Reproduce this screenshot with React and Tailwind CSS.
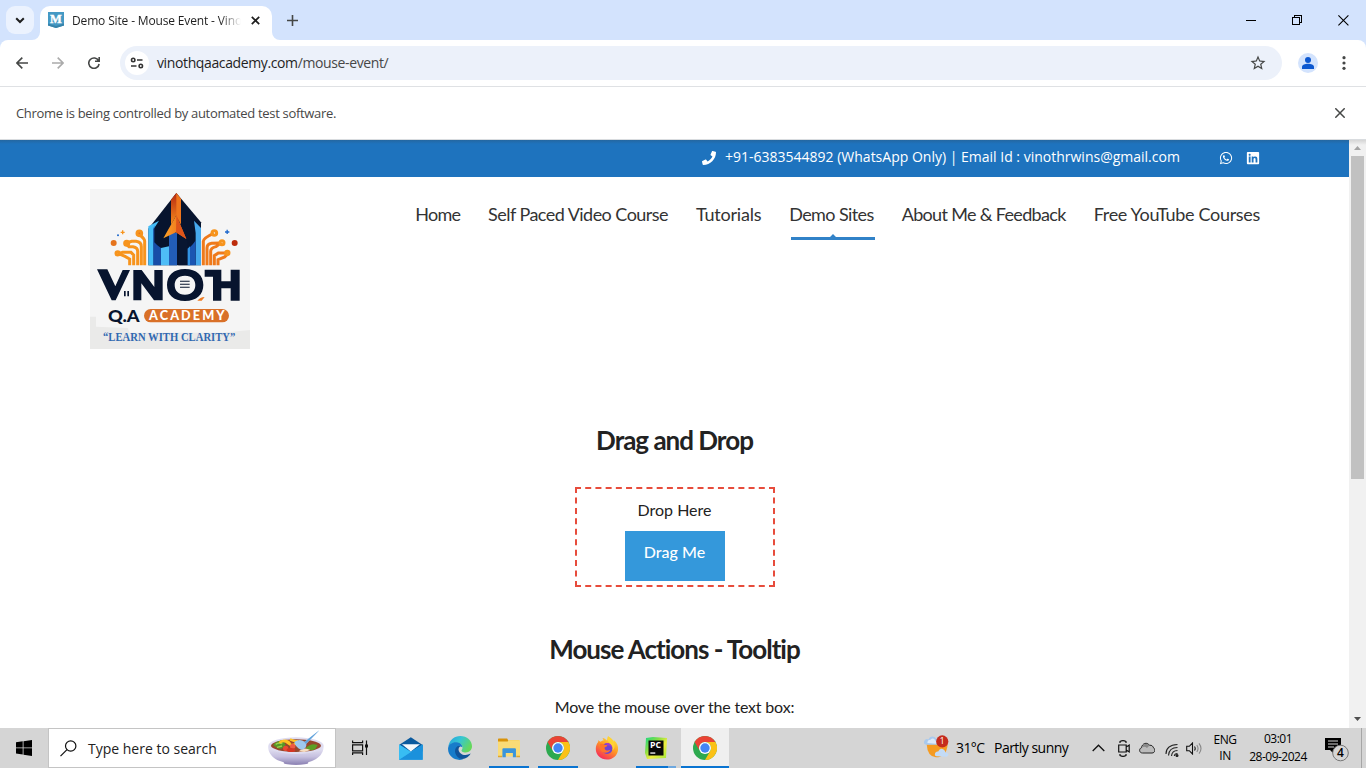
import React from "react";
import { FaPhone, FaWhatsapp, FaLinkedin } from "react-icons/fa";
import { MdStarOutline } from "react-icons/md";

const ui = "font-['Open_Sans','Noto_Sans',sans-serif]";

function TabStrip() {
  return (
    <div className="flex h-10 shrink-0 items-end bg-[#d3e3fd]">
      <div className="flex h-10 w-10 items-start pl-1.5 pt-1.5">
        <div className="flex h-7 w-7 items-center justify-center rounded-[9px] bg-[#ebf2fe]">
          <svg width="10" height="7" viewBox="0 0 10 7" fill="none" stroke="#1f1f1f" strokeWidth="2">
            <path d="M1.2 1.2 5 5l3.8-3.8" />
          </svg>
        </div>
      </div>
      <div className="relative flex h-[34px] w-[232px] items-start rounded-t-[10px] bg-white pl-2">
        <svg className="absolute -left-2 bottom-0" width="8" height="8"><path d="M8 0v8H0a8 8 0 0 0 8-8z" fill="#fff" /></svg>
        <svg className="absolute -right-2 bottom-0" width="8" height="8"><path d="M0 0v8h8a8 8 0 0 1-8-8z" fill="#fff" /></svg>
        <svg className="mt-1.5" width="16" height="16" viewBox="0 0 16 16">
          <path d="M0 0h16v13.5L8 16 0 13.5z" fill="#4499c4" />
          <path d="M0 11.5 8 14l8-2.5v2L8 16l-8-2.5z" fill="#3783aa" />
          <text x="8" y="11.3" textAnchor="middle" fontFamily="Liberation Serif" fontWeight="700" fontSize="12.5" fill="#fff" stroke="#fff" strokeWidth=".4">M</text>
        </svg>
        <div className={`ml-2 mt-[5px] h-5 w-[172px] whitespace-nowrap text-[12px] leading-5 tracking-[-0.15px] text-[#1f1f1f] [mask-image:linear-gradient(to_right,black_148px,transparent_169px)] ${ui}`}>
          Demo Site - Mouse Event - Vino
        </div>
        <svg className="ml-[7px] mt-[10px]" width="9" height="9" viewBox="0 0 9 9" stroke="#1f1f1f" strokeWidth="1.7">
          <path d="m.8.8 7.4 7.4M8.2.8.8 8.2" />
        </svg>
      </div>
      <svg className="mb-[14px] ml-[15px]" width="11" height="11" viewBox="0 0 11 11" stroke="#454746" strokeWidth="1.6">
        <path d="M5.5 0v11M0 5.5h11" />
      </svg>
      <div className="mb-[14px] ml-auto flex items-center">
        <svg width="10" height="12" viewBox="0 0 10 12" stroke="#000" shapeRendering="crispEdges"><path d="M0 6.5h10" /></svg>
        <svg className="ml-9" width="11" height="12" viewBox="0 0 11 12" fill="none" stroke="#000" shapeRendering="crispEdges">
          <path d="M.5 3.5h7v7h-7zM2.5 3V1.500h7v7H8" />
        </svg>
        <svg className="ml-[35px] mr-[17px]" width="11" height="11" viewBox="0 0 11 11" stroke="#000" strokeWidth="1.1"><path d="m.4.4 10 10M10.400.4l-10 10" /></svg>
      </div>
    </div>
  );
}

function Toolbar() {
  return (
    <div className="shrink-0 bg-[#d3e3fd]">
      <div className="flex h-[47px] items-start rounded-t-[8px] border-b border-[#dfe1e4] bg-white pt-1.5">
        <svg className="ml-4 mt-[11px]" width="12" height="12" viewBox="0 0 12 12" fill="none" stroke="#454746" strokeWidth="1.6"><path d="M12 6H1M6.300.6.9 6l5.400 5.400" /></svg>
        <svg className="ml-6 mt-[11px]" width="12" height="12" viewBox="0 0 12 12" fill="none" stroke="#ababab" strokeWidth="1.6"><path d="M0 6h11M5.700.6 11.100 6l-5.400 5.400" /></svg>
        <svg className="ml-6 mt-[11px]" width="12" height="12" viewBox="0 0 12 12" fill="none" stroke="#454746" strokeWidth="1.6"><path d="M10.600 3.800A5.200 5.200 0 1 0 11.100 7M11.200 0v4.200H7" /></svg>
        <div className="ml-5 flex h-[34px] w-[1162px] items-center rounded-full bg-[#ecf1fa] pl-[5px]">
          <div className="flex h-6 w-6 items-center justify-center rounded-full bg-white">
            <svg width="14" height="12" viewBox="0 0 14 12" fill="none" stroke="#333" strokeWidth="1.6">
              <circle cx="3.200" cy="3" r="1.700" /><path d="M7 3h5.500M1 9h5.500" /><circle cx="10.800" cy="9" r="1.700" />
            </svg>
          </div>
          <span className={`ml-2 whitespace-nowrap text-[14px] leading-5 tracking-[-0.38px] text-[#1f1f1f] ${ui}`}>vinothqaacademy.com<span className="text-[#474747]">/mouse-event/</span></span>
          <MdStarOutline className="ml-auto mr-[15px] h-[18px] w-[18px] text-[#454746]" />
        </div>
        <div className="ml-4 mt-[7px] flex h-5 w-5 items-center justify-center rounded-full bg-[#d3e3fd]">
          <svg width="12" height="12" viewBox="0 0 12 12" fill="#0b57d0"><circle cx="6" cy="3" r="3" /><path d="M0 12v-2c0-2 3-3.200 6-3.200S12 8 12 10v2z" /></svg>
        </div>
        <svg className="ml-[24px] mt-[10px]" width="4" height="14" viewBox="0 0 4 14" fill="#454746"><circle cx="2" cy="1.700" r="1.600" /><circle cx="2" cy="7" r="1.600" /><circle cx="2" cy="12.300" r="1.600" /></svg>
      </div>
    </div>
  );
}

function InfoBar() {
  return (
    <div className={`flex h-[53px] shrink-0 items-center border-b border-[#d9dcdf] bg-white pl-4 pr-[21px] ${ui}`}>
      <span className="whitespace-nowrap text-[13px] leading-5 tracking-[-0.32px] text-[#474747]">Chrome is being controlled by automated test software.</span>
      <svg className="ml-auto" width="10" height="10" viewBox="0 0 10 10" stroke="#454746" strokeWidth="1.5"><path d="m.3.3 9.400 9.400M9.700.3.3 9.700" /></svg>
    </div>
  );
}

function Logo() {
  return (
    <svg width="160" height="160" viewBox="30 27 480 480" className="mt-3 shrink-0">
      <defs>
        <linearGradient id="fire" x1="0" y1="0" x2="0" y2="1"><stop offset="0" stopColor="#b62a12" /><stop offset="1" stopColor="#f58a1c" /></linearGradient>
        <linearGradient id="gold" x1="0" y1="0" x2="1" y2="0"><stop offset="0" stopColor="#fca326" /><stop offset="1" stopColor="#e9651b" /></linearGradient>
      </defs>
      <path d="M30 27h480v480H30z" fill="#f5f5f5" />
      <path d="M30 410l18 0v30l95 4 6 14 277 0 84-8v57H30z" fill="#eaeae9" />
      <g fill="none" stroke="#f7941d" strokeWidth="9">
        <path d="M194 256v-73q0-6-14-18M184 256v-56q0-14-16-16h-13l-16 5M173 256v-42q0-12-14-14h-12l-10-10M161 256v-31l-8-8h-25l-12 4M149 256v-19l-14-8-19-8" />
        <path d="M370 256v-72q0-10 31-24M381 256v-52q0-12 14-14l26-1M392 256v-42q0-10 16-14l16-12M403 256v-29l12-8h26M414 256v-17l20-8 9-10" stroke="#ef7a1b" />
        <circle cx="178" cy="160" r="7" fill="#e8741c" /><circle cx="140" cy="190" r="6" /><circle cx="113" cy="220" r="5" /><circle cx="403" cy="159" r="7" /><circle cx="426" cy="188" r="6" /><circle cx="442" cy="219" r="5" />
      </g>
      <circle cx="101" cy="189" r="9" fill="#e5741d" /><circle cx="464" cy="189" r="9" fill="#bd2c0b" />
      <path d="M122 157h12M128 151v12" stroke="#f7941d" strokeWidth="4" />
      <path d="M435 156h13M441.500 149v13" stroke="#1d68cd" strokeWidth="4" /><circle cx="114" cy="166" r="3" fill="#1d68cd" />
      <path d="M289 39 363 127v129H205V146z" fill="#07142e" />
      <path d="M205 139l32-17-16 25v109h-16z" fill="#46bdf7" />
      <path d="M220 148l3-12v51q8 10 20 17v52h-23z" fill="#174da7" />
      <path d="M342 122l21 22v112h-16v-97z" fill="#46a9ed" />
      <path d="M347 150v106h-24v-50q13-7 24-25z" fill="#1b55b2" />
      <path d="M243 204l24-5v57h-24z" fill="#4ebdf7" />
      <path d="M267 158h24v98h-24z" fill="#225db8" /><path d="M301 166l22 17v73h-28v-90z" fill="#081631" />
      <path d="M323 206l7-7v57h-7z" fill="#3193e4" />
      <path d="M289 39l-16 20v75l16-28 14 27V57z" fill="url(#fire)" />
      <path d="M289 39v70l14 24V57z" fill="#ee751d" />
      <path d="M289 106 319 177l-31-20-38 18z" fill="url(#gold)" />
      <path d="M289 106 319 177l-31-20z" fill="#df551a" />
      <g fill="#07142e">
        <path d="M51 268h31l24 51 22-49h22l-43 91H95z" />
        <path d="M160 361v-91h25l38 51v-51h25v91h-26l-38-51v51z" />
        <path fillRule="evenodd" d="M315 267c35 0 55 20 55 48s-20 48-55 48-54-20-54-48 19-48 54-48zm0 20c-21 0-31 12-31 28s10 29 31 29 31-13 31-29-10-28-31-28z" />
        <path d="M374 269h50v35h28v-35h27v93h-27v-37h-28v37h-25v-72h-25z" />
        <path d="M132 333h5v16h-5zM142 333h5v16h-5z" /><path d="M300 302h29v3h-29zM300 311h29v3h-29zM300 320h29v3h-29z" />
      </g>
      <path d="M352 362q8-10 22-11l-9 11z" fill="#ed7b23" />
      <text x="84" y="427" textLength="95" lengthAdjust="spacingAndGlyphs" fontFamily="Lato" fontWeight="900" fontSize="53" fill="#07142e">Q.A</text>
      <rect x="192" y="387" width="255" height="40" rx="20" fill="#d97028" />
      <text x="207" y="420" textLength="227" fontFamily="Lato" fontWeight="900" fontSize="38" fill="#fff">ACADEMY</text>
      <text x="69" y="482" textLength="397" lengthAdjust="spacingAndGlyphs" fontFamily="Liberation Serif" fontWeight="700" fontSize="35" fill="#3168b1">“LEARN WITH CLARITY”</text>
    </svg>
  );
}

const menu = [
  { label: "Home", cls: "h-10 tracking-[-0.8px]" },
  { label: "Self Paced Video Course", cls: "h-10 tracking-[-0.54px]" },
  { label: "Tutorials", cls: "h-10 tracking-[-0.22px]" },
  { label: "Demo Sites", cls: "relative h-10 tracking-[-0.6px]", active: true },
  { label: "About Me & Feedback", cls: "h-10 tracking-[-0.67px]" },
  { label: "Free YouTube Courses", cls: "h-10 tracking-[-0.32px]" },
];

function Page() {
  return (
    <div className="flex h-[588px] shrink-0 overflow-hidden bg-white">
      <div className="flex w-[1349px] flex-col font-['Lato',sans-serif] text-[#222]">
        <div className="flex h-[37px] shrink-0 justify-end bg-[#1e73be] bg-[linear-gradient(to_bottom,#2467a1,#1e73be_4px)] pr-[89px] text-white">
          <FaPhone className="mt-[11px] h-[14px] w-[14px]" />
          <span className={`ml-[9px] mt-[7px] w-[456px] whitespace-nowrap text-[14px] font-medium leading-5 ${ui}`}>+91-6383544892 (WhatsApp Only) | Email Id : vinothrwins@gmail.com</span>
          <FaWhatsapp className="ml-[38px] mt-[11px] h-[14px] w-[14px]" />
          <FaLinkedin className="ml-[13px] mt-[11px] h-[14px] w-[14px]" />
        </div>
        <div className="flex shrink-0 justify-between pl-[90px] pr-[89px]">
          <Logo />
          <nav className="mt-[23px] flex h-10 gap-7 whitespace-nowrap text-[18px] leading-[28px] text-[#333]">
            {menu.map(({ label, cls, active }) => (
              <div key={label} className={cls}>
                {label}
                {active && <svg className="absolute -right-px bottom-0" width="84" height="6" viewBox="0 0 84 6" fill="#3182c8"><path d="M0 3h39l3-3 3 3h39v3H0z" /></svg>}
              </div>
            ))}
          </nav>
        </div>
        <div className="flex flex-col items-center pt-[71px]">
          <h2 className="text-[26px] font-bold leading-10 tracking-[-1px]">Drag and Drop</h2>
          <div className="mt-[27px] flex h-[100px] w-[200px] flex-col items-center border-2 border-dashed border-[#e74c3c] pt-[7px]">
            <div className="text-[16px] leading-[27px]">Drop Here</div>
            <div className="mt-2 h-[50px] w-[100px] bg-[#3498db] pt-[7px] text-center text-[16px] font-medium leading-[27px] text-white">Drag Me</div>
          </div>
          <h2 className="mt-[42px] text-[26px] font-bold leading-10 tracking-[-1px]">Mouse Actions - Tooltip</h2>
          <p className="mt-6 text-[16px] leading-[27px] tracking-[-0.18px]">Move the mouse over the text box:</p>
        </div>
      </div>
      <div className="flex w-[17px] flex-col items-center bg-[#f1f1f1] bg-[linear-gradient(to_bottom,#d5d5d5,#f1f1f1_5px)]">
        <svg className="mt-1.5" width="7" height="4"><path d="M0 4 3.500 0 7 4z" fill="#a3a3a3" /></svg>
        <div className="mt-1.5 h-[323px] w-[13px] bg-[#c1c1c1]" />
        <svg className="mb-[7px] mt-auto" width="7" height="4"><path d="M0 0h7L3.500 4z" fill="#505050" /></svg>
      </div>
    </div>
  );
}

function Chrome() {
  return (
    <svg width="24" height="24" viewBox="0 0 24 24">
      <circle cx="12" cy="12" r="12" fill="#2da94f" />
      <path d="M12 0a12 12 0 0 1 10.400 6H12a6 6 0 0 0-5.200 9L1.600 6A12 12 0 0 1 12 0z" fill="#ea4335" />
      <path d="M22.400 6A12 12 0 0 1 12 24l5.200-9A6 6 0 0 0 12 6z" fill="#fbc116" />
      <circle cx="12" cy="12" r="6" fill="#fff" /><circle cx="12" cy="12" r="4.700" fill="#4285f4" />
    </svg>
  );
}

const Mail = () => (
  <svg width="24" height="23" viewBox="57 35 73 68">
    <path d="M57 58 93 35l36 23v20H57z" fill="#0b5a9e" /><path d="M66 56h55L93 78z" fill="#f5f9fc" />
    <path d="M57 57l36 22 36-22v46H57z" fill="#28a8ea" /><path d="M129 57 57 103h72z" fill="#1b91dc" /><path d="M57 57l36 23-36 23z" fill="#38bdf3" />
  </svg>
);

const Edge = () => (
  <svg width="24" height="24" viewBox="0 0 24 24">
    <defs>
      <linearGradient id="edgeTop" x1="0" y1="0" x2="1" y2=".5"><stop offset="0" stopColor="#239fdf" /><stop offset=".5" stopColor="#36c6d2" /><stop offset="1" stopColor="#65d85b" /></linearGradient>
    </defs>
    <path d="M.3 10.500C1.500 4 6.500 0 12.300 0 19 0 24 4.800 24 10.300c0 3.900-3 6.100-6.200 6.100-3.400 0-4.300-1.300-4.300-2 0-.5 1-1 1-2.900 0-2.500-2.600-4.700-6-4.700-4 0-6.900 1.700-8.200 3.700z" fill="url(#edgeTop)" />
    <path d="M.1 12C.6 8.500 4 6.300 8 6.300c3.500 0 6.300 2.300 6.400 5-3-2.300-6.400.4-6.400 3.500 0 4.600 3.500 8.400 8.300 7.800-1.200.9-3 1.400-4.800 1.300C4.600 23.600-.5 18.400.1 12z" fill="#177cca" />
    <path d="M9.500 10.200C4.500 13.500 7.500 22 14 23.100c4.200-.3 7.300-2.500 8.700-5.500-4.300 2.400-8.900 1.500-11-1.200-1.500-1.800-1.800-4.400.4-6.200-.8-.4-1.800-.4-2.600 0z" fill="#10549a" />
  </svg>
);

const Folder = () => (
  <svg width="22" height="20" viewBox="354 41 65 56">
    <path d="M354 43q0-2 2-2h25l3 5v7h-30z" fill="#d9930a" /><path d="M385 45h30q3 0 3 3v12h-33z" fill="#f7cf5d" />
    <path d="M354 50h28l5-3h32v47H354z" fill="#fadb76" />
    <path d="M367 96V73q0-3 3-3h34q3 0 3 3v23h-9V84h-21v12z" fill="#3a95dc" /><path d="M354 92h12v4h-12zM408 92h11v4h-11z" fill="#e0a72d" />
  </svg>
);

const Firefox = () => (
  <svg width="24" height="24" viewBox="0 0 24 24">
    <defs><linearGradient id="fox" x1=".8" y1="0" x2=".2" y2="1"><stop offset="0" stopColor="#fff042" /><stop offset=".45" stopColor="#ff9a22" /><stop offset="1" stopColor="#f51f61" /></linearGradient></defs>
    <path d="M3.500 4c.7 1 1.300 1.500 2.200 1.800.8-.7 2-1.200 3-1.200L7.500 2c2 0 3.500 1.500 4.500 2.600L13 .3c3.500 2 4.800 4 5.500 6l.3-2.300c3.500 3 4.700 6.200 4.200 10.200C22.200 19.800 17.700 23.500 12 23.500 5.700 23.500.8 18.900.8 13c0-2.700.7-5 2.400-7z" fill="url(#fox)" />
    <circle cx="12.100" cy="12.500" r="5.400" fill="#7043d1" /><path d="M10 7.500c3-1.600 8 .5 7.700 5.500-.4-2-2.500-3.500-4.500-3.500z" fill="#a43acb" />
    <path d="M5 8c1.500-.7 3.200-.3 4.500.8l3 .5c-.3 1.500-2.500 1.500-3 2.500.3 3.200 3.800 3.300 6 2-1.500 4-8.500 4-10 .2z" fill="#ff7429" /><path d="M13 .3c-1.500 4 .5 5.500 3 8.200 1.600 1.700 2 4 1.400 6 2.500-1.700 3-5 1.600-8.500C18 3.500 15.500 2 13 .3z" fill="#ffd333" />
  </svg>
);

const PyCharm = () => (
  <svg width="22" height="22" viewBox="0 0 22 22">
    <defs><linearGradient id="pc" x1="0" y1="0" x2="1" y2="1"><stop offset="0" stopColor="#19d783" /><stop offset=".35" stopColor="#86de43" /><stop offset=".6" stopColor="#f1ee3e" /><stop offset="1" stopColor="#9fe83b" /></linearGradient></defs>
    <path d="M1 1 8 0l14 1-1 20L2 22 0 16z" fill="url(#pc)" /><path d="M3.500 3.500h15v15h-15z" fill="#080808" />
    <text x="5" y="10.800" textLength="11" lengthAdjust="spacingAndGlyphs" fontFamily="Open Sans" fontWeight="700" fontSize="8" fill="#fff">PC</text>
    <path d="M5.300 15.300h5v1.500h-5z" fill="#ddd" />
  </svg>
);

const Bowl = () => (
  <svg width="56" height="36" viewBox="803 16 168 106">
    <defs><linearGradient id="bowl" x1="0" y1="0" x2="0" y2="1"><stop offset="0" stopColor="#eae9f7" /><stop offset=".6" stopColor="#c6c0df" /><stop offset="1" stopColor="#9289b8" /></linearGradient></defs>
    <ellipse cx="887" cy="113" rx="37" ry="7" fill="#9389b8" />
    <path d="M803 64c1 34 34 52 84 52s82-19 83-52z" fill="url(#bowl)" />
    <ellipse cx="887" cy="62" rx="83" ry="25" fill="#dedcf0" /><ellipse cx="887" cy="62" rx="75" ry="19" fill="#97472c" />
    <path d="M818 60q12-13 30-14l8 14q-9 14-24 10z" fill="#579728" /><path d="M826 58q10-6 20-2M830 67l15-4" stroke="#9bd14a" strokeWidth="4" fill="none" />
    <path d="M916 69q17-17 36-9l-7 12q-17 9-29-3z" fill="#5c9f25" />
    <path d="M837 54q12-12 27 1t29-7M850 47q17 0 19 11M869 43q18 8 25 5" fill="none" stroke="#ffc322" strokeWidth="7" />
    <circle cx="856" cy="70" r="8" fill="#e94932" /><circle cx="877" cy="64" r="8" fill="#ef5943" /><ellipse cx="872" cy="75" rx="13" ry="6" fill="#d43423" />
    <path d="M895 79q16-15 35-4l-18 6z" fill="#f7dec1" />
    <path d="M882 51q15-11 31-1l44-34-39 40q2 16-16 18-18-8-20-23z" fill="#9fc8ed" /><path d="m912 51 45-35-40 41z" fill="#62a3db" />
  </svg>
);

function Cell({ children, bar }) {
  return <div className="flex h-10 w-12 flex-col items-center"><div className="flex h-[38px] w-full items-center justify-center pt-0.5">{children}</div>{bar && <div className="h-0.5 w-10 bg-[#0a74d1]" />}</div>;
}

function Taskbar() {
  return (
    <div className={`flex h-10 shrink-0 bg-[#d5d5d5] text-black ${ui}`}>
      <div className="flex w-12 items-center justify-center">
        <svg width="16" height="16" viewBox="0 0 16 16"><path d="M0 2.300 6.700 1.300v6.200H0zM7.500 1.200 16 0v7.500H7.500zM0 8.300h6.700v6.300L0 13.600zM7.500 8.300H16V16l-8.500-1.200z" /></svg>
      </div>
      <div className="flex h-10 w-72 items-center border border-[#c4c4c4] bg-white pl-[11px]">
        <svg width="17" height="17" viewBox="0 0 17 17" fill="none" stroke="#111" strokeWidth="1.200"><circle cx="10.700" cy="6" r="5.200" /><path d="m7 9.700-6.500 6.500" /></svg>
        <span className="ml-[11px] w-[180px] whitespace-nowrap pt-0.5 text-[14px] leading-5 text-[#222]">Type here to search</span>
        <Bowl />
      </div>
      <div className="flex w-[51px] items-center pl-4">
        <svg width="16" height="16" viewBox="0 0 16 16" fill="none" stroke="#111" strokeWidth="1.200"><path d="M.6.5v2.200h10V.5M.6 15v-2.200h10V15M.6 4.800h10v6H.6zM14.500.5v14.500" /><path d="M13 4.500h3v3h-3z" fill="#111" stroke="none" /></svg>
      </div>
      <div className="flex gap-px">
        <Cell><Mail /></Cell><Cell><Edge /></Cell><Cell bar><Folder /></Cell><Cell bar><Chrome /></Cell><Cell><Firefox /></Cell>
        <div className="flex h-10 w-12 flex-col items-center"><div className="flex h-[38px] items-center pt-0.5"><PyCharm /></div><div className="flex h-0.5 w-10"><div className="w-8 bg-[#0a74d1]" /><div className="w-2 bg-[#6ea8df]" /></div></div>
        <div className="flex h-10 w-12 flex-col bg-[#efefef]"><div className="flex h-[38px] items-center justify-center pt-0.5"><Chrome /></div><div className="h-0.5 bg-[#0a74d1]" /></div>
      </div>
      <div className="ml-auto flex w-[442px] items-center whitespace-nowrap">
        <svg className="mb-1" width="25" height="25" viewBox="72 31 74 70">
          <path d="M80 59h62q-3 39-35 39Q82 95 80 59z" fill="#f59b22" /><path d="M80 61q-12-2-7-12 4-7 12-4 5-12 18-7 9 5 8 13 7 8-3 10z" fill="#a8c9ee" /><path d="M82 56q0-10 9-10 9-8 15 3 6 7 1 9z" fill="#dceafa" />
          <path d="M109 95q-7-2-4-10 3-6 9-4 5-12 16-6 6 5 5 9 10 0 9 8l-5 4z" fill="#c3dbf6" /><circle cx="126" cy="51" r="18" fill="#c52b1d" />
          <text x="126" y="60" textAnchor="middle" fontFamily="Open Sans" fontSize="25" fill="#fff">1</text>
        </svg>
        <span className="ml-[7px] w-[38px] text-[14px] leading-5 tracking-[-0.6px]">31°C</span>
        <span className="w-[98px] text-[14px] leading-5 tracking-[-0.52px]">Partly sunny</span>
        <svg width="13" height="8" viewBox="0 0 13 8" fill="none" stroke="#111" strokeWidth="1.300"><path d="M.7 7 6.500 1.200 12.300 7" /></svg>
        <svg className="ml-[13px]" width="12" height="17" viewBox="0 0 12 17" fill="none" stroke="#111" strokeWidth="1.200"><path d="M2 3V1.600Q5-.2 8 1.600V3M2 14v1.400q3 1.800 6 0V14M.7 5h7.500v7H.7zM8.200 7l3-2v7l-3-2z" /></svg>
        <svg className="ml-[9px]" width="16" height="12" viewBox="0 0 16 12"><path d="M3.500 11C0 11-.3 6.600 2.500 5.700 3 1.500 8-.5 10.500 3.300 13 2.800 14 4.600 14.500 5.800c2 1 1.800 5.200-1.500 5.200z" fill="#bbb" stroke="#222" /><path d="M3.200 5.500C4 1.800 8 .4 10.200 3.800L8 6q-2.500-2-4.800-.5z" fill="#888" /></svg>
        <svg className="ml-2.5 mt-1" width="14" height="14" viewBox="0 0 14 14" fill="none" stroke="#222" strokeWidth="1.100"><path d="M1 11Q1 2 12.500 1.500M3.500 12.500Q4 4.500 12.500 4.500M6.500 13q.5-5.500 6-5.500M9.300 13q.3-2.500 3.200-2.500" /><circle cx="12" cy="12.500" r="1" fill="#222" /></svg>
        <svg className="ml-[7px]" width="17" height="13" viewBox="0 0 17 13" fill="none" stroke="#111" strokeWidth="1.100"><path d="M.7 4.300h2.600L6.500 1v11L3.300 8.700H.7zM8.500 4.500q1.400 2 0 4" /><path d="M10.800 3q2.500 3.500 0 7M13 1.300q4 5.200 0 10.400" stroke="#888" /></svg>
        <div className="ml-2 w-[28px] text-center text-[12px] leading-4 tracking-[-0.4px]">ENG<br />IN</div>
        <div className="ml-[5px] w-[68px] text-center text-[12px] leading-[18px] tracking-[-0.5px]">03:01<br />28-09-2024</div>
        <svg className="ml-3 mt-1" width="26" height="26" viewBox="0 0 26 26">
          <path d="M1 1h16v12H9.500v3.500L6 13H1z" /><path d="M4 4h10M4 7h10M4 10h6" stroke="#d5d5d5" strokeWidth="1.100" /><circle cx="16.500" cy="16" r="7.800" fill="#d5d5d5" stroke="#777" />
          <text x="16.500" y="20.300" textAnchor="middle" fontFamily="Open Sans" fontWeight="600" fontSize="12">4</text>
        </svg>
        <div className="ml-auto mr-1 h-10 w-px bg-[#a6a6a6]" />
      </div>
    </div>
  );
}

export default function App() {
  return (
    <div className="flex h-[768px] w-[1366px] flex-col overflow-hidden bg-white">
      <TabStrip />
      <Toolbar />
      <InfoBar />
      <Page />
      <Taskbar />
    </div>
  );
}
